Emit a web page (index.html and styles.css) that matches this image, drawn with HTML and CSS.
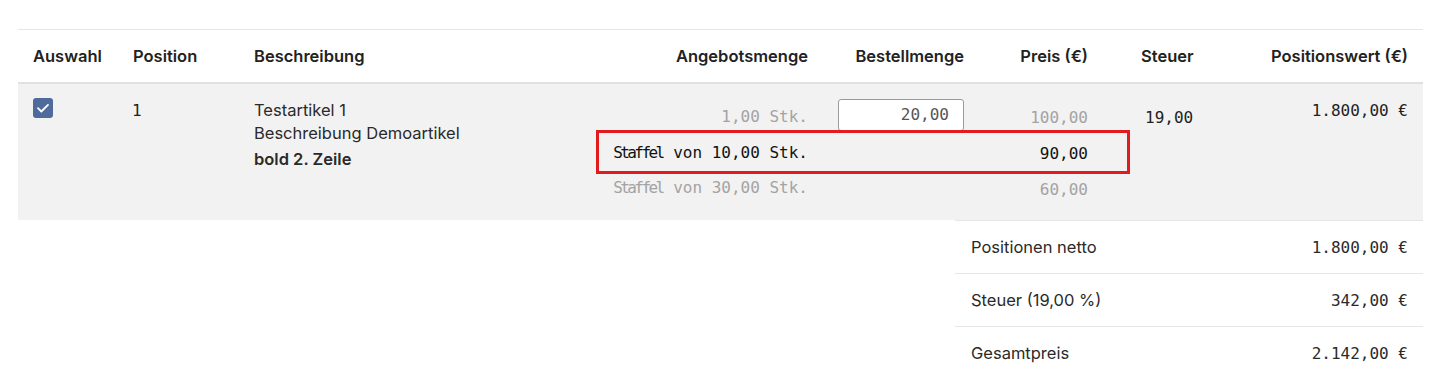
FILE: index.html
```html
<!DOCTYPE html>
<html lang="de">
<head>
<meta charset="utf-8">
<title>Positionen</title>
<link rel="stylesheet" href="styles.css">
</head>
<body>
<div class="sheet">
  <div class="grid head">
    <div class="c c1">Auswahl</div>
    <div class="c c2">Position</div>
    <div class="c c3">Beschreibung</div>
    <div class="c c4 r">Angebotsmenge</div>
    <div class="c c5 r">Bestellmenge</div>
    <div class="c c6 r">Preis (€)</div>
    <div class="c c7">Steuer</div>
    <div class="c c8 r">Positionswert (€)</div>
  </div>
  <div class="grid item">
    <div class="c c1 sel"><span class="check"><svg viewBox="0 0 20 20" width="20" height="20"><path d="M5 10.2l3.3 3.3L15 6.8" fill="none" stroke="#fff" stroke-width="1.8" stroke-linecap="round" stroke-linejoin="round"/></svg></span></div>
    <div class="c c2 pos mono">1</div>
    <div class="c c3 desc">
      <div>Testartikel 1</div>
      <div>Beschreibung Demoartikel</div>
      <div class="bold">bold 2. Zeile</div>
    </div>
    <div class="c c4 r mono muted q1">1,00 Stk.</div>
    <div class="c c5 inp"><span class="field mono">20,00</span></div>
    <div class="c c6 r mono muted p1">100,00</div>
    <div class="c c7 mono tax">19,00</div>
    <div class="c c8 r mono total">1.800,00 €</div>
    <div class="c c4 r mono q2"><span class="tight">Staffel</span> von 10,00 Stk.</div>
    <div class="c c6 r mono p2">90,00</div>
    <div class="c c4 r mono muted q3"><span class="tight">Staffel</span> von 30,00 Stk.</div>
    <div class="c c6 r mono muted p3">60,00</div>
    <div class="mark"></div>
  </div>
  <div class="sums">
    <div class="srow"><span>Positionen netto</span><span class="mono">1.800,00 €</span></div>
    <div class="srow"><span>Steuer (19,00 %)</span><span class="mono">342,00 €</span></div>
    <div class="srow"><span>Gesamtpreis</span><span class="mono">2.142,00 €</span></div>
  </div>
</div>
</body>
</html>
```
FILE: styles.css
```css
* { box-sizing: border-box; }
html, body { margin: 0; padding: 0; background: #fff; }
body {
  font-family: Inter, "Noto Sans", sans-serif;
  font-size: 16.5px;
  color: #2a2a2a;
}
.sheet {
  margin: 29px 24px 0 18px;
  border-top: 1px solid #e6e6e6;
}
.grid {
  display: grid;
  grid-template-columns: 100px 121px 341px 243px 156px 124px 147px 173px;
}
.c { padding: 0 15px; }
.c7 { padding-left: 38px; }
.r { text-align: right; }
.mono { font-family: "DejaVu Sans Mono", "Liberation Mono", monospace; font-size: 16px; }
.tight { letter-spacing: -2.6px; margin-right: 1px; }
.muted { color: #a3a3a3; }

.head {
  height: 54px;
  align-items: center;
  border-bottom: 2px solid #dfe2e5;
  font-weight: 600;
  color: #222;
}

.item {
  position: relative;
  background: #f2f2f2;
  padding: 15px 0 19px;
  grid-template-rows: 32px 42px 28px;
  align-items: center;
}
.sel, .pos, .desc, .total { grid-row: 1 / 4; align-self: start; }
.sel { margin-top: -1px; }
.check {
  display: block;
  width: 20px; height: 20px;
  background: #4f6b9c;
  border-radius: 3px;
}
.check svg { display: block; }
.pos { padding-left: 14px; margin-top: 2px; line-height: 20px; color: #222; }
.desc { margin-top: 0; line-height: 23px; color: #2a2a2a; }
.desc .bold { font-weight: 600; margin-top: 3px; }
.total { margin-top: 2px; line-height: 20px; color: #222; }
.q1, .inp, .p1, .tax { grid-row: 1; }
.q1 { margin-top: 2px; }
.p1, .tax { margin-top: 4px; }
.tax { color: #222; padding-left: 42px; }
.q2, .p2 { grid-row: 2; color: #111; }
.p2 { margin-top: 3px; }
.q3, .p3 { grid-row: 3; }
.p3 { margin-top: 4px; }
.q2, .q3 { white-space: nowrap; }
.c4 { grid-column: 4; }
.c6 { grid-column: 6; }
.inp { grid-column: 5; align-self: stretch; }
.field {
  display: block;
  height: 32px;
  line-height: 30px;
  padding: 0 14px;
  text-align: right;
  background: #fff;
  border: 1px solid #9a9a9a;
  border-radius: 3px;
  color: #555;
}
.mark {
  position: absolute;
  left: 578px;
  top: 46px;
  width: 534px;
  height: 44px;
  border: 3px solid #e21b1f;
}

.sums {
  margin-left: 937px;
}
.srow {
  display: flex;
  justify-content: space-between;
  align-items: center;
  height: 53px;
  padding: 0 15px 0 16px;
  border-top: 1px solid #e6e6e6;
  color: #2a2a2a;
}
```
